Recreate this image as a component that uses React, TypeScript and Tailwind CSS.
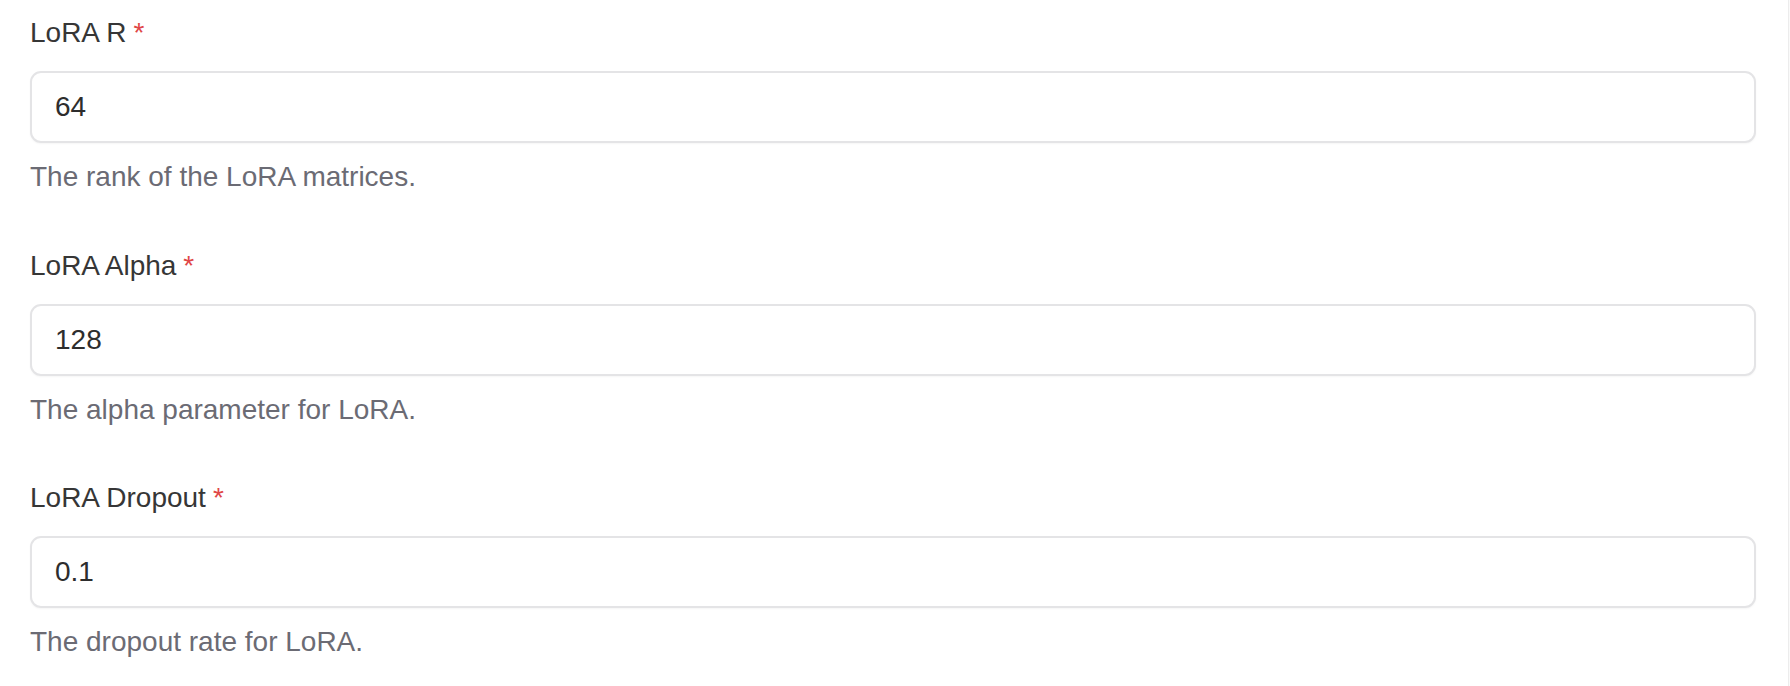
const fields = [
  { label: "LoRA R", value: "64", help: "The rank of the LoRA matrices." },
  { label: "LoRA Alpha", value: "128", help: "The alpha parameter for LoRA." },
  { label: "LoRA Dropout", value: "0.1", help: "The dropout rate for LoRA." },
];

function Field({ label, value, help }: { label: string; value: string; help: string }) {
  return (
    <div className="flex flex-col">
      <label className="text-[28px] leading-[40px] text-[#363636]">
        {label}
        <span className="ml-[7px] text-[#e04646]">*</span>
      </label>
      <input
        readOnly
        value={value}
        className="mt-[18px] h-[72px] w-full rounded-[11px] border-2 border-[#e4e4e6] bg-white pl-[23px] text-[28px] text-[#2d2d2d] shadow-[0_1px_2px_rgba(0,0,0,0.04)] outline-none"
      />
      <p className="mt-[14px] text-[28px] leading-[40px] text-[#6b6b74]">{help}</p>
    </div>
  );
}

export default function App() {
  return (
    <div className="flex min-h-[686px] w-full bg-white font-['Liberation_Sans',Arial,sans-serif]">
      <div className="flex flex-1 flex-col gap-[48.5px] border-r border-[#ececec] pb-10 pl-[30px] pr-[32px] pt-[13px]">
        {fields.map((f) => (
          <Field key={f.label} {...f} />
        ))}
      </div>
      <div className="w-px bg-[#fafafa]" />
    </div>
  );
}
